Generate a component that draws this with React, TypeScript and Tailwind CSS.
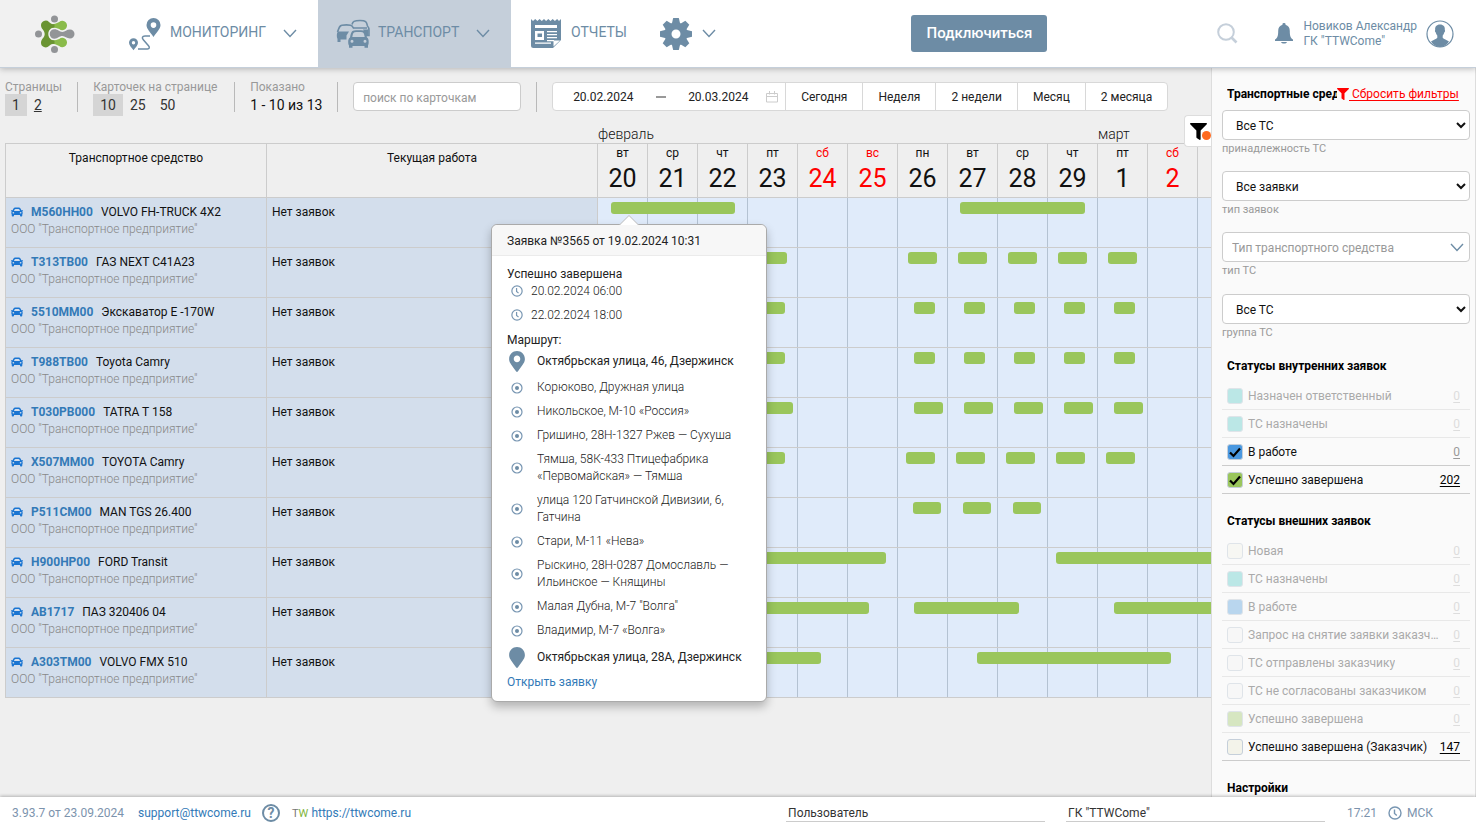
import React from 'react';
import { FaCar, FaFilter, FaMapMarker, FaMapMarkerAlt } from 'react-icons/fa';

interface Bar {
  start: number;
  width: number;
}

interface Vehicle {
  plate: string;
  model: string;
  bars: Bar[];
}

interface Status {
  name: string;
  count: number;
  color: string;
  checked?: boolean;
  active?: boolean;
}

const series = (first: number, width: number, count: number): Bar[] =>
  Array.from({ length: count }, (_, i) => ({ start: first + i * 50, width }));

// bar offsets are counted from the first day of the range, 50px per day
const vehicles: Vehicle[] = [
  { plate: 'M560HH00', model: 'VOLVO FH-TRUCK 4X2', bars: [{ start: 13, width: 124 }, { start: 362, width: 125 }] },
  { plate: 'T313TB00', model: 'ГАЗ NEXT C41A23', bars: [...series(10, 29, 4), ...series(310, 29, 5)] },
  { plate: '5510MM00', model: 'Экскаватор E -170W', bars: [...series(16, 21, 4), ...series(316, 21, 5)] },
  { plate: 'T988TB00', model: 'Toyota Camry', bars: [...series(16, 21, 4), ...series(316, 21, 5)] },
  { plate: 'T030PB000', model: 'TATRA T 158', bars: [...series(16, 29, 4), ...series(316, 29, 5)] },
  { plate: 'X507MM00', model: 'TOYOTA Camry', bars: [...series(8, 29, 4), ...series(308, 29, 5)] },
  { plate: 'P511CM00', model: 'MAN TGS 26.400', bars: series(315, 28, 3) },
  { plate: 'H900HP00', model: 'FORD Transit', bars: [{ start: 108, width: 180 }, { start: 458, width: 180 }] },
  { plate: 'AB1717', model: 'ПАЗ 320406 04', bars: [{ start: 116, width: 155 }, { start: 316, width: 105 }, { start: 516, width: 120 }] },
  { plate: 'A303TM00', model: 'VOLVO FMX 510', bars: [{ start: 29, width: 194 }, { start: 379, width: 194 }] },
];

const days = [
  ['вт', '20'], ['ср', '21'], ['чт', '22'], ['пт', '23'], ['сб', '24'], ['вс', '25'], ['пн', '26'],
  ['вт', '27'], ['ср', '28'], ['чт', '29'], ['пт', '1'], ['сб', '2'], ['вс', '3'],
];

const route = [
  'Корюково, Дружная улица',
  'Никольское, М-10 «Россия»',
  'Гришино, 28Н-1327 Ржев — Сухуша',
  'Тямша, 58К-433 Птицефабрика «Первомайская» — Тямша',
  'улица 120 Гатчинской Дивизии, 6, Гатчина',
  'Стари, М-11 «Нева»',
  'Рыскино, 28Н-0287 Домославль — Ильинское — Княщины',
  'Малая Дубна, М-7 "Волга"',
  'Владимир, М-7 «Волга»',
];

const internalStatuses: Status[] = [
  { name: 'Назначен ответственный', count: 0, color: 'bg-[#7dd6d3]' },
  { name: 'ТС назначены', count: 0, color: 'bg-[#7dd6d3]' },
  { name: 'В работе', count: 0, color: 'bg-[#4a98e0]', checked: true, active: true },
  { name: 'Успешно завершена', count: 202, color: 'bg-[#9ac65c]', checked: true, active: true },
];

const externalStatuses: Status[] = [
  { name: 'Новая', count: 0, color: 'bg-[#f5f5ee]' },
  { name: 'ТС назначены', count: 0, color: 'bg-[#7dd6d3]' },
  { name: 'В работе', count: 0, color: 'bg-[#7ab4e4]' },
  { name: 'Запрос на снятие заявки заказчика', count: 0, color: 'bg-[#f5f5f5]' },
  { name: 'ТС отправлены заказчику', count: 0, color: 'bg-[#f5f5f5]' },
  { name: 'ТС не согласованы заказчиком', count: 0, color: 'bg-[#f5f5f5]' },
  { name: 'Успешно завершена', count: 0, color: 'bg-[#b4d38a]' },
  { name: 'Успешно завершена (Заказчик)', count: 147, color: 'bg-[#f3f3ea]', active: true },
];

const Logo = () => (
  <svg width="42" height="40" viewBox="0 0 42 40">
    <g fill="#8abb4a">
      <path d="M18 10.300c3 0 5-1.500 7.200-2.300a4.700 4.700 0 1 1 0 7c-2.200-.6-4.200-1.700-7.200-1.500z" />
      <path d="M18 29.700c3 0 5 1.500 7.200 2.300a4.700 4.700 0 1 0 0-7c-2.200.6-4.200 1.700-7.200 1.500z" />
    </g>
    <path fill="#6a9432" d="M15 8c1.500 1.400 3 2.300 5.500 2.300v3.200c-3.500 0-6.200 2.900-6.200 6.500s2.700 6.500 6.200 6.500v3.200c-2.500 0-4 .9-5.500 2.300a4.700 4.700 0 0 1-8-3.300c0-3.700 3.700-5 3.700-8.700S7 15 7 11.300A4.700 4.700 0 0 1 15 8z" />
    <g fill="#929497">
      <circle cx="20.500" cy="5" r="3.500" />
      <circle cx="4.500" cy="20" r="3.500" />
      <circle cx="20.500" cy="35.500" r="3.500" />
      <path d="M20.500 15.200c3.500 0 4.500 2.700 8 2.700 2.500 0 4-2.400 7.500-2.400a4.500 4.500 0 1 1 0 9c-3.500 0-5-2.400-7.500-2.400-3.500 0-4.500 2.700-8 2.700a4.800 4.800 0 1 1 0-9.600z" />
    </g>
  </svg>
);

const RouteIcon = () => (
  <svg width="34" height="34" viewBox="0 0 34 34" fill="#6d8ca5" fillRule="evenodd">
    <path d="M25.500 1a7 7 0 0 1 7 7c0 4-4 7.500-7 12-3-4.500-7-8-7-12a7 7 0 0 1 7-7zm0 4.300a2.800 2.800 0 1 0 0 5.600 2.800 2.800 0 0 0 0-5.600z" />
    <path d="M5.500 21.200a4.500 4.500 0 0 1 4.500 4.500c0 2.600-2.600 4.700-4.500 7.500C3.600 30.400 1 28.300 1 25.700a4.500 4.500 0 0 1 4.500-4.500zm0 2.800a1.700 1.700 0 1 0 0 3.400 1.700 1.700 0 0 0 0-3.400z" />
    <path d="M22 19h-5c-3 0-3.200 2-1.700 3.800l5.200 6c1.500 1.800.8 3.200-1 3.200H10" fill="none" stroke="#6d8ca5" strokeWidth="1.500" />
  </svg>
);

const CarsIcon = () => (
  <svg width="34" height="30" viewBox="0 0 34 30" fill="#6d8ca5">
    <path d="M16 5.500C16.800 2.500 18 1.500 24 1.500s6.500 1 7.500 5.500c1.300 1.200 1.500 2.500 1.500 4.500v5h-3M17 9h14" fill="none" stroke="#6d8ca5" strokeWidth="1.600" />
    <path d="M27 10.500h5.500v6.500H30z" />
    <path d="M1.500 13C3 8.500 3.500 6.500 6 6.200c3-.4 6-.4 8.500 0 1.500.3 2.300 1.300 3 3" fill="none" stroke="#6d8ca5" strokeWidth="1.600" />
    <path d="M2 12.500h11l-2.500 4v4H4.500V23H1.500v-3C.5 18 .5 14 2 12.500z" />
    <path fillRule="evenodd" d="M14 18.500c1-4.800 1.700-6.500 4-6.900 2.500-.4 6.500-.4 9 0 2.300.4 3 2.100 4 6.900 1.500 1 1.700 2.500 1.700 4.500 0 1.500-.2 2.700-.7 3.500v2.200h-3.500V27h-12v1.700H13v-2.200c-.6-.8-.8-2-.8-3.500 0-2 .3-3.500 1.800-4.500zm2.300-.6h12.400c-.7-3.200-1-4.300-2.200-4.600-2-.4-6-.4-8 0-1.200.3-1.500 1.400-2.200 4.600zM16 20.700a1.500 1.500 0 1 0 0 3 1.500 1.500 0 0 0 0-3zm13 0a1.500 1.500 0 1 0 0 3 1.500 1.500 0 0 0 0-3z" />
  </svg>
);

const ReportIcon = () => (
  <svg width="30" height="30" viewBox="0 0 30 30">
    <path fill="#6d8ca5" d="M0 0l2 2 2.200-2 2.200 2 2.200-2 2.200 2L13 0l2.100 2 2.200-2 2.200 2 2.200-2 2.200 2 2.200-2L28 2l2-2v21l-8 8H2.500A2.500 2.500 0 0 1 0 26.500z" />
    <g fill="#fff">
      <path d="M4 6h22v3H4zM4 12h9v9H4z" />
      <path d="M16 12h10v1.300H16zM16 15h10v1.300H16zM16 18h10v1.300H16zM16 21h7v1.300h-7zM4 23.500h16v1.300H4z" />
      <path d="M22.500 27.500v-6H29z" />
    </g>
    <path fill="#6d8ca5" d="M6.500 14.500h4.500V18H6.500z" />
  </svg>
);

const Gear = () => (
  <svg width="34" height="34" viewBox="-17 -17 34 34" fill="#6d8ca5">
    {[0, 45, 90, 135, 180, 225, 270, 315].map((angle) => (
      <path key={angle} d="M-4.500-9L-2.800-16h5.600L4.500-9z" transform={`rotate(${angle})`} />
    ))}
    <circle r="8" fill="none" stroke="#6d8ca5" strokeWidth="7" />
  </svg>
);

const Chevron = () => (
  <svg width="14" height="9" viewBox="0 0 14 9" fill="none" stroke="#6d8ca5" strokeWidth="1.400">
    <path d="M1 1l6 6.500L13 1" />
  </svg>
);

const Clock = ({ size }: { size: number }) => (
  <svg width={size} height={size} viewBox="0 0 14 14" fill="none" stroke="#7896b2" strokeWidth="1.400">
    <circle cx="7" cy="7" r="6" />
    <path d="M6.500 3.500v4l2.300 2" />
  </svg>
);

const Bell = () => (
  <svg width="18" height="22" viewBox="0 0 18 22" fill="#6d8ca5">
    <path d="M9 0a1.500 1.500 0 0 1 1.500 1.800c3 .8 4.300 3.200 4.300 6.200 0 5 .7 7 3.200 8.500V18H0v-1.500C2.500 15 3.200 13 3.200 8c0-3 1.300-5.400 4.300-6.200A1.500 1.500 0 0 1 9 0zM6 19h6c-.5 1-1.500 1.500-3 1.500S6.500 20 6 19z" />
  </svg>
);

const Avatar = () => (
  <svg width="28" height="28" viewBox="0 0 28 28">
    <circle cx="14" cy="14" r="13" fill="#fff" stroke="#6d8ca5" strokeWidth="1.200" />
    <path fill="#6d8ca5" d="M14 4.500c3.500 0 5.200 2.300 4.800 5.500.5.500.3 2-.6 2.500-.3 1.500-.9 2.400-1.500 3v2.300c1 1.700 4 2 6.300 3.700C21 25 17.500 27 14 27s-7-2-9-5.500c2.300-1.700 5.300-2 6.300-3.700v-2.300c-.6-.6-1.200-1.500-1.500-3-.9-.5-1.100-2-.6-2.500-.4-3.200 1.300-5.500 4.800-5.500z" />
  </svg>
);

const Header: React.FC = () => (
  <header className="relative z-20 flex h-[68px] shrink-0 border-b border-[#c5cfda] bg-white text-sm text-[#6d8ca5] shadow-[0_1px_6px_rgba(0,0,0,0.25)]">
    <a href="#home" aria-label="TTWCome" className="flex w-[110px] items-center justify-center bg-[#f1f1f1]">
      <Logo />
    </a>
    <nav className="flex">
      <a href="#monitoring" className="flex w-[208px] items-center pl-[18px]">
        <RouteIcon />
        <span className="ml-2 w-[113px] pb-1">МОНИТОРИНГ</span>
        <Chevron />
      </a>
      <a href="#transport" className="flex w-[193px] items-center bg-[#c5cfda] pl-[18px]">
        <CarsIcon />
        <span className="ml-2 w-[98px] pb-1">ТРАНСПОРТ</span>
        <Chevron />
      </a>
      <a href="#reports" className="flex w-[148px] items-center pl-5">
        <ReportIcon />
        <span className="ml-2.5 pb-1">ОТЧЕТЫ</span>
      </a>
      <button aria-label="Настройки" className="flex items-center gap-[9px]">
        <Gear />
        <Chevron />
      </button>
    </nav>
    <div className="ml-auto flex items-center pr-[22px]">
      <button className="mr-[170px] h-[37px] w-[136px] rounded-[3px] bg-[#6d8ca5] text-[15px] font-medium text-white">
        Подключиться
      </button>
      <button aria-label="Поиск" className="mr-[37px]">
        <svg width="21" height="21" viewBox="0 0 21 21" fill="none" stroke="#c5cfda" strokeWidth="2">
          <circle cx="9" cy="9" r="7.800" />
          <path d="M14.500 14.500l5 5" strokeWidth="2.600" />
        </svg>
      </button>
      <button aria-label="Уведомления" className="mr-2.5">
        <Bell />
      </button>
      <div className="mr-[9px] text-xs leading-[15px]">
        <div>Новиков Александр</div>
        <div>ГК "TTWCome"</div>
      </div>
      <Avatar />
    </div>
  </header>
);

const Divider = () => <div className="mt-1 h-[30px] w-px shrink-0 bg-[#b9b9b9]" />;

const Toolbar: React.FC = () => (
  <div className="flex h-[57px] gap-[15px] pt-2.5 pl-[5px] text-sm">
    <div>
      <div className="text-xs leading-[18px] text-[#999]">Страницы</div>
      <div className="-mt-0.5 flex leading-[22px] text-[#333]">
        <a href="#1" className="bg-[#d5d5d5] px-[7px]">1</a>
        <a href="#2" className="px-[7px] underline">2</a>
      </div>
    </div>
    <Divider />
    <div className="w-[126px]">
      <div className="text-xs leading-[18px] text-[#999]">Карточек на странице</div>
      <div className="-mt-0.5 flex leading-[22px] text-[#333]">
        <button className="bg-[#d5d5d5] px-[7px]">10</button>
        <button className="px-[7px]">25</button>
        <button className="px-[7px]">50</button>
      </div>
    </div>
    <Divider />
    <div className="w-[72px] whitespace-nowrap">
      <div className="text-xs leading-[18px] text-[#999]">Показано</div>
      <div className="-mt-0.5 leading-[22px] text-[#111]">1 - 10 из 13</div>
    </div>
    <Divider />
    <input
      aria-label="поиск по карточкам"
      placeholder="поиск по карточкам"
      className="mt-1 h-[29px] w-[168px] rounded border border-[#ccc] bg-white px-[9px] pt-0.5 text-xs placeholder:text-[#999]"
    />
    <Divider />
    <div className="mt-1 flex h-[29px] overflow-hidden rounded border border-[#d8d8d8] bg-white text-xs text-[#222]">
      <div className="flex w-[233px] items-center border-r border-[#d8d8d8] pl-5">
        <input aria-label="Начало периода" defaultValue="20.02.2024" className="w-[83px] pt-px" />
        <span className="mr-[22px] h-0.5 w-2.5 bg-[#999]" />
        <input aria-label="Конец периода" defaultValue="20.03.2024" className="w-[78px] pt-px" />
        <svg width="12" height="12" viewBox="0 0 12 12" fill="none" stroke="#ccc">
          <path d="M.5 2.500h11v8.500H.5zM.5 5.500h11M3.500 0v3.500M8.500 0v3.500" />
        </svg>
      </div>
      {['Сегодня', 'Неделя', '2 недели', 'Месяц', '2 месяца'].map((label) => (
        <button key={label} className="border-r border-[#d8d8d8] px-[15px] last:border-r-0">{label}</button>
      ))}
    </div>
  </div>
);

const Popover: React.FC = () => (
  <div className="absolute top-[156px] left-[491px] z-10 w-[276px] rounded-md border border-[#aaa] bg-white text-xs text-[#222] shadow-[0_5px_10px_rgba(0,0,0,0.25)]">
    <svg className="absolute -top-2.5 left-[127px]" width="20" height="11" viewBox="0 0 20 11">
      <path d="M0 10.500L10 .5l10 10" fill="#fff" stroke="#bbb" />
    </svg>
    <h3 className="relative rounded-t-md border-b border-[#ebebeb] bg-[#f7f7f7] px-[15px] pt-0.5 leading-7">
      Заявка №3565 от 19.02.2024 10:31
    </h3>
    <div className="px-[15px] pt-2.5 pb-2">
      <div className="-mb-1 leading-[17px]">Успешно завершена</div>
      {['20.02.2024 06:00', '22.02.2024 18:00'].map((time) => (
        <div key={time} className="flex items-center gap-2 pl-1 leading-6 font-light">
          <Clock size={12} />
          {time}
        </div>
      ))}
      <div className="mt-0.5 leading-[22px]">Маршрут:</div>
      <ul className="font-light">
        <li className="mb-[5px] flex h-5 items-center font-normal">
          <FaMapMarkerAlt className="mr-2.5 w-5 shrink-0 text-[21px] text-[#6d8ca5]" />
          Октябрьская улица, 46, Дзержинск
        </li>
        {route.map((point) => (
          <li key={point} className="flex items-center pt-[3px] pb-1 leading-[17px]">
            <svg className="mr-2.5 w-5 shrink-0" height="12" viewBox="0 0 12 12">
              <circle cx="6" cy="6" r="5" fill="none" stroke="#7896b2" strokeWidth="1.200" />
              <circle cx="6" cy="6" r="2" fill="#6d8ca5" />
            </svg>
            <span className="w-[200px]">{point}</span>
          </li>
        ))}
        <li className="flex h-7 items-center font-normal">
          <FaMapMarker className="mr-2.5 w-5 shrink-0 text-[21px] text-[#6d8ca5]" />
          Октябрьская улица, 28А, Дзержинск
        </li>
      </ul>
      <a href="#order" className="block leading-[22px] text-[#337ab7]">Открыть заявку</a>
    </div>
  </div>
);

const Schedule: React.FC = () => (
  <div className="overflow-hidden pl-[5px] text-xs text-[#111]">
    <div className="flex h-[18px] pl-[593px] text-sm leading-[18px] font-light">
      <span className="w-[500px] shrink-0">февраль</span>
      <span>март</span>
    </div>
    <table className="w-[1242px] table-fixed border-collapse">
      <thead>
        <tr className="h-[54px] align-top">
          <th className="w-[261px] border border-[#ccc] pt-1.5 font-normal">Транспортное средство</th>
          <th className="w-[331px] border border-[#ccc] pt-1.5 font-normal">Текущая работа</th>
          {days.map(([name, date]) => (
            <th
              key={date}
              className={`w-[50px] border border-[#ccc] font-normal ${name === 'сб' || name === 'вс' ? 'text-[#f00]' : ''}`}
            >
              <div className="leading-[18px]">{name}</div>
              <div className="text-[25px] leading-[34px]">{date}</div>
            </th>
          ))}
        </tr>
      </thead>
      <tbody>
        {vehicles.map((vehicle) => (
          <tr key={vehicle.plate} className="h-[50px] bg-[#e0ebfa] align-top">
            <td className="border border-[#ccc] bg-[#d3deec] px-[5px] pt-1.5">
              <div className="flex items-center leading-[17px]">
                <FaCar className="mr-2 mb-0.5 text-xs text-[#1a75d2]" />
                <a href="#vehicle" className="mr-2 font-bold text-[#337ab7]">{vehicle.plate}</a>
                {vehicle.model}
              </div>
              <div className="leading-[17px] font-light text-[#888]">ООО "Транспортное предприятие"</div>
            </td>
            <td className="border border-[#ccc] bg-[#d3deec] px-[5px] pt-1.5 leading-[17px]">Нет заявок</td>
            {days.map(([, date], i) => (
              <td key={date} className="relative border border-x-[#b4c2d2] border-y-[#ccc] p-0">
                {i === 0 && vehicle.bars.map((bar) => (
                  <span
                    key={bar.start}
                    className="absolute top-1 z-[1] h-3 rounded-[3px] bg-[#9ac65c]"
                    style={{ left: bar.start, width: bar.width }}
                  />
                ))}
              </td>
            ))}
          </tr>
        ))}
      </tbody>
    </table>
  </div>
);

const SelectField: React.FC<{ id: string; label: string; value: string }> = ({ id, label, value }) => (
  <div className="h-[61px]">
    <select id={id} className="block h-[30px] w-full rounded border border-[#ccc] bg-white px-[9px] pt-px text-xs text-[#111]">
      <option>{value}</option>
    </select>
    <label htmlFor={id} className="block text-[11px] leading-[18px] text-[#999]">{label}</label>
  </div>
);

const StatusList: React.FC<{ title: string; items: Status[] }> = ({ title, items }) => (
  <section className="mb-[17px]">
    <h3 className="mb-1.5 pl-[5px] leading-5 font-bold text-black">{title}</h3>
    {items.map((item) => (
      <div
        key={item.name}
        className={`flex h-7 items-center border-b pr-2.5 pl-[5px] ${item.active ? 'border-[#ccc] text-[#111]' : 'border-[#e8e8e8] text-[#aaa]'}`}
      >
        <label className="flex min-w-0 flex-1 items-center gap-[5px]">
          <span className={`relative flex size-4 shrink-0 ${item.active ? '' : 'opacity-50'}`}>
            <input
              type="checkbox"
              defaultChecked={item.checked}
              className={`peer size-4 appearance-none rounded-[3px] border border-[#c5cfda] ${item.color}`}
            />
            <svg className="pointer-events-none absolute inset-0 hidden peer-checked:block" width="16" height="16" viewBox="0 0 16 16">
              <path d="M3 8.500l3.500 3.500L13 4.500" fill="none" stroke="#000" strokeWidth="2.200" />
            </svg>
          </span>
          <span className="truncate">{item.name}</span>
        </label>
        <a href="#status" className={`ml-2.5 underline underline-offset-2 ${item.count ? 'text-black' : item.active ? 'text-[#999]' : 'text-[#ddd]'}`}>
          {item.count}
        </a>
      </div>
    ))}
  </section>
);

const Sidebar: React.FC = () => (
  <aside className="w-[265px] shrink-0 overflow-hidden border-x border-[#ddd] bg-[#fafafa] pt-4 pr-[5px] pl-2.5 text-xs">
    <div className="flex h-[26px] pl-[5px] leading-5">
      <h3 className="w-[110px] overflow-hidden font-bold whitespace-nowrap text-black">Транспортные средства</h3>
      <a href="#reset" className="flex items-center self-start whitespace-nowrap text-[#f00]">
        <FaFilter />
        <span className="whitespace-pre underline underline-offset-2"> Сбросить фильтры</span>
      </a>
    </div>
    <SelectField id="owner" label="принадлежность ТС" value="Все ТС" />
    <SelectField id="order-type" label="тип заявок" value="Все заявки" />
    <div className="relative h-[62px]">
      <input
        id="vehicle-type"
        placeholder="Тип транспортного средства"
        className="block h-[30px] w-full rounded border border-[#ccc] bg-white px-[9px] pt-px placeholder:text-[#999]"
      />
      <label htmlFor="vehicle-type" className="block text-[11px] leading-[18px] text-[#999]">тип ТС</label>
      <button aria-label="Показать типы" className="absolute top-[11px] right-1.5">
        <Chevron />
      </button>
    </div>
    <SelectField id="group" label="группа ТС" value="Все ТС" />
    <div className="pt-px">
      <StatusList title="Статусы внутренних заявок" items={internalStatuses} />
      <StatusList title="Статусы внешних заявок" items={externalStatuses} />
      <h3 className="pl-[5px] leading-5 font-bold text-black">Настройки</h3>
    </div>
  </aside>
);

const Footer: React.FC = () => (
  <footer className="relative z-20 flex h-[31px] shrink-0 items-center bg-white pr-[43px] pl-3 text-xs text-[#7c93ad] shadow-[0_-1px_3px_rgba(0,0,0,0.25)]">
    <span className="mr-3.5">3.93.7 от 23.09.2024</span>
    <a href="mailto:support@ttwcome.ru" className="mr-[11px] text-[#337ab7]">support@ttwcome.ru</a>
    <button aria-label="Помощь" className="mr-3 flex size-[18px] items-center justify-center rounded-full border-2 border-[#6d8ca5] text-sm leading-none font-bold text-[#6d8ca5]">
      ?
    </button>
    <span className="mr-[3px] pt-0.5 text-[11px] leading-4 text-[#777]">T<span className="text-[#7fb53c]">W</span></span>
    <a href="#site" className="text-[#337ab7]">https://ttwcome.ru</a>
    <input aria-label="Пользователь" defaultValue="Пользователь" className="ml-auto h-[18px] w-[259px] border-b border-[#ccc] px-0.5 pt-0.5 text-[#333]" />
    <input aria-label="Компания" defaultValue='ГК "TTWCome"' className="mr-[22px] ml-[21px] h-[18px] w-[259px] border-b border-[#ccc] px-0.5 pt-0.5 text-[#333]" />
    <span className="mr-[11px]">17:21</span>
    <Clock size={14} />
    <span className="ml-[5px]">МСК</span>
  </footer>
);

const App: React.FC = () => (
  <div className="flex h-screen flex-col bg-[#efefef] font-['Roboto',sans-serif]">
    <Header />
    <div className="flex min-h-0 flex-1">
      <main className="relative min-w-0 flex-1">
        <Toolbar />
        <Schedule />
        <Popover />
        <button aria-label="Фильтры" className="absolute top-[47px] right-0 z-10 h-8 w-[27px] rounded-l border border-r-0 border-[#ddd] bg-white pl-[5px]">
          <FaFilter className="text-[17px] text-black" />
          <span className="absolute right-0 bottom-1.5 size-[9px] rounded-full bg-[#ff6a1f]" />
        </button>
      </main>
      <Sidebar />
    </div>
    <Footer />
  </div>
);

export default App;
